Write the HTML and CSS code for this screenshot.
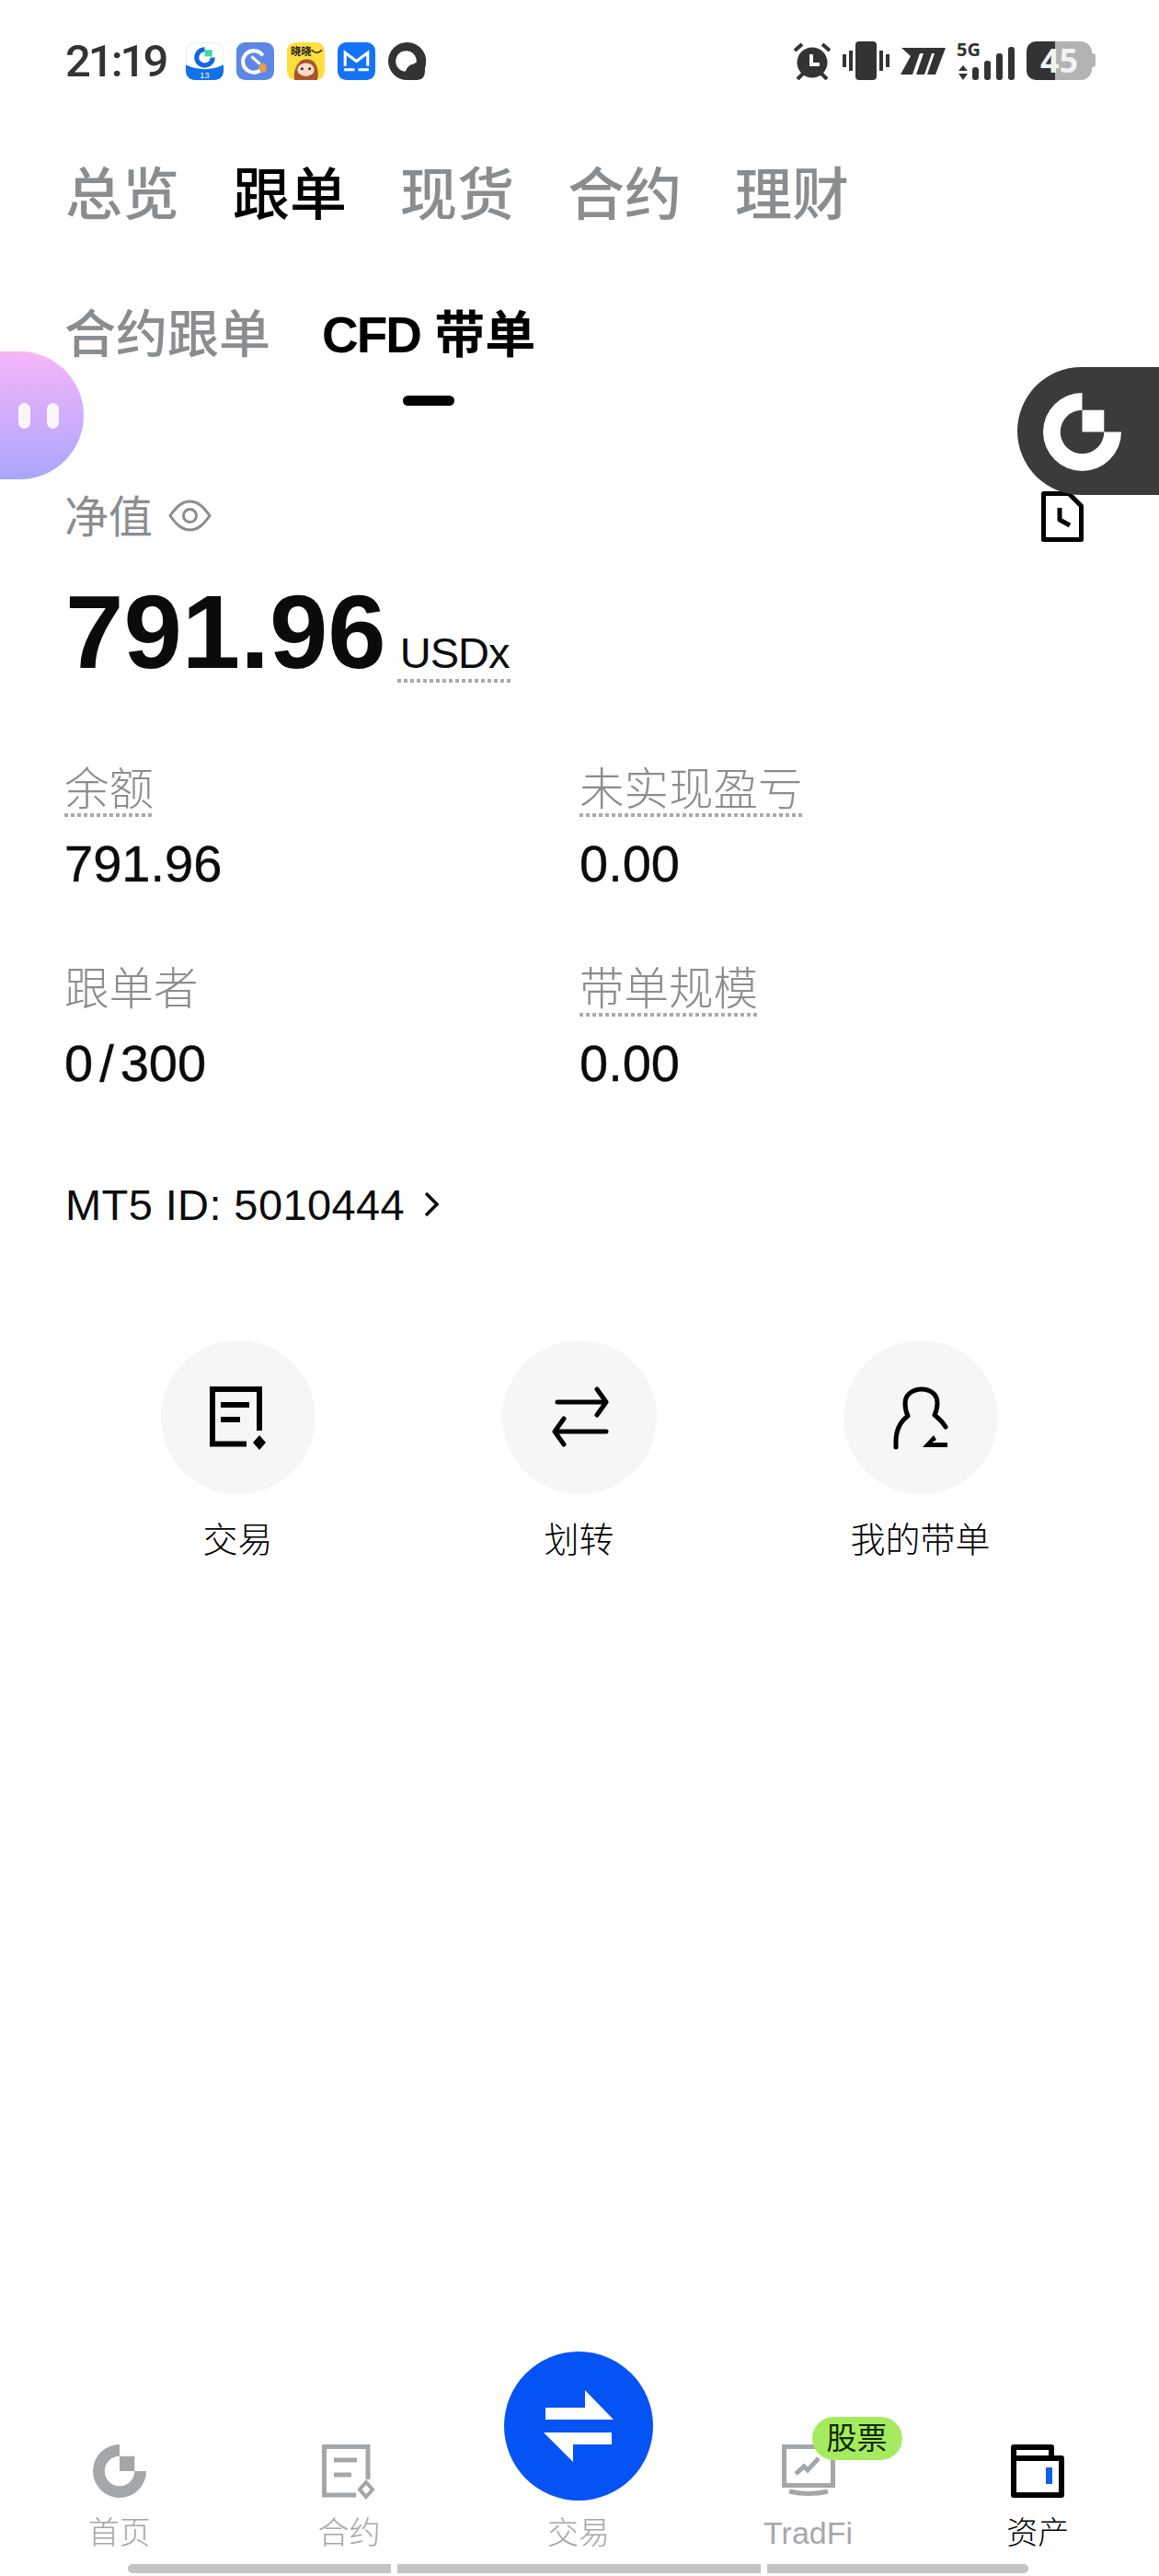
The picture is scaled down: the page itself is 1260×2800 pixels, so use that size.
FILE: index.html
```html
<!DOCTYPE html>
<html lang="zh-CN">
<head>
    <meta charset="UTF-8">
    <title>CFD 带单</title>
    <link rel="stylesheet" href="styles.css">
</head>
<body>
    <svg class="defs" width="0" height="0">
        <symbol id="logo" viewBox="0 0 100 100">
            <path d="M50 0A50 50 0 1 0 100 50H78A28 28 0 1 1 50 22Z"/>
            <path d="M50 22H78V50H50Z"/>
        </symbol>
    </svg>

    <div class="page">
        <div class="status">
            <span class="time">21:19</span>
            <div class="apps">
                <svg class="app" viewBox="0 0 40 40">
                    <rect x="0.500" y="0.500" width="39" height="39" rx="9" fill="#fff" stroke="#eee"/>
                    <path d="M0 24Q20 33 40 24V31A9 9 0 0 1 31 40H9A9 9 0 0 1 0 31Z" fill="#1170ea"/>
                    <path d="M20 5A11 11 0 1 0 31 16H26A6 6 0 1 1 20 10Z" fill="#1566e0"/>
                    <rect x="20" y="8" width="8" height="7" fill="#3fd8a0"/>
                    <text class="app-num" x="20" y="38">13</text>
                </svg>
                <svg class="app" viewBox="0 0 40 40">
                    <rect width="40" height="40" rx="9" fill="#5c87e4"/>
                    <path d="M28 14A11.500 11.500 0 1 0 29 25" fill="none" stroke="#fff" stroke-width="4"/>
                    <path d="M16 15L25 23" stroke="#fff" stroke-width="3"/>
                    <ellipse cx="28" cy="27" rx="4" ry="5" fill="#ee9d4a"/>
                </svg>
                <svg class="app" viewBox="0 0 40 40">
                    <rect width="40" height="40" rx="9" fill="#ffdf3e"/>
                    <text class="app-word" x="4" y="14">晓晓</text>
                    <path d="M26 8Q32 14 37 8" fill="none" stroke="#222" stroke-width="1.500"/>
                    <path d="M8 40Q6 28 14 20Q22 15 29 21Q35 29 32 40Z" fill="#a8552e"/>
                    <ellipse cx="20" cy="29" rx="9" ry="7" fill="#fbdcc2"/>
                    <circle cx="16" cy="28" r="1.500" fill="#333"/>
                    <circle cx="24" cy="28" r="1.500" fill="#333"/>
                </svg>
                <svg class="app" viewBox="0 0 40 40">
                    <rect width="40" height="40" rx="9" fill="#1473f5"/>
                    <path d="M8 25V11L20 20L32 11V25" fill="none" stroke="#fff" stroke-width="3"/>
                    <path d="M7 29H18M22 29H33" stroke="#fff" stroke-width="3"/>
                </svg>
                <svg class="app" viewBox="0 0 40 40">
                    <path d="M20 0A20 20 0 0 1 39 27Q40 40 31 40H20A20 20 0 0 1 20 0Z" fill="#333"/>
                    <circle cx="19" cy="20" r="11" fill="#fff"/>
                    <path d="M17 34Q20 24 27 23Q31 19 35 25L39 30L30 36Z" fill="#333"/>
                </svg>
            </div>
            <div class="sys">
                <svg class="alarm" viewBox="0 0 42 42">
                    <circle cx="21" cy="23" r="16.500" fill="#333"/>
                    <path d="M2 10L10 3M40 10L32 3M5 41L11 35M37 41L31 35" stroke="#333" stroke-width="4"/>
                    <path d="M20 14V25H29" fill="none" stroke="#fff" stroke-width="4"/>
                </svg>
                <svg class="vibrate" viewBox="0 0 51 42">
                    <rect x="14" y="0" width="23" height="42" rx="4" fill="#333"/>
                    <path d="M2 14V28M9 10V32M42 10V32M49 14V28" stroke="#333" stroke-width="4"/>
                </svg>
                <svg class="mi" viewBox="0 0 49 29">
                    <path d="M1 0H49L38 29H29L37 6H34L26 29H17L25 6H21L13 29H0L11 9Z" fill="#333"/>
                </svg>
                <div class="signal">
                    <span class="net">5G</span>
                    <svg class="bars" viewBox="0 0 63 42">
                        <path d="M7 26L12 32H2ZM7 42L2 35H12Z" fill="#333"/>
                        <rect x="17" y="28" width="7" height="14" rx="3" fill="#333"/>
                        <rect x="30" y="21" width="7" height="21" rx="3" fill="#333"/>
                        <rect x="43" y="13" width="7" height="29" rx="3" fill="#333"/>
                        <rect x="56" y="6" width="7" height="36" rx="3" fill="#333"/>
                    </svg>
                </div>
                <div class="battery">
                    <span class="battery-num">45</span>
                </div>
            </div>
        </div>

        <div class="tabs">
            <span class="tab">总览</span>
            <span class="tab active">跟单</span>
            <span class="tab">现货</span>
            <span class="tab">合约</span>
            <span class="tab">理财</span>
        </div>

        <div class="subtabs">
            <div class="subtab">合约跟单</div>
            <div class="subtab active"><span class="latin">CFD</span> 带单<i class="marker"></i></div>
        </div>

        <div class="equity-head">
            <span class="equity-label">净值</span>
            <svg class="eye" viewBox="0 0 47 35">
                <path d="M2 17.500C10 6 16 2 23.500 2S37 6 45 17.500C37 29 31 33 23.500 33S10 29 2 17.500Z"/>
                <circle cx="23.500" cy="17.500" r="7"/>
            </svg>
            <svg class="history" viewBox="0 0 46 55">
                <path d="M2.500 2.500H30L43.500 16V52.500H2.500Z"/>
                <path d="M20 18V31L31 37"/>
            </svg>
        </div>

        <div class="amount">
            <span class="amount-num">791.96</span>
            <span class="amount-unit">USDx</span>
        </div>

        <div class="stats">
            <div class="stat">
                <span class="stat-label dotted">余额</span>
                <span class="stat-value">791.96</span>
            </div>
            <div class="stat">
                <span class="stat-label dotted">未实现盈亏</span>
                <span class="stat-value">0.00</span>
            </div>
            <div class="stat">
                <span class="stat-label">跟单者</span>
                <span class="stat-value">0<span class="slash">/</span>300</span>
            </div>
            <div class="stat">
                <span class="stat-label dotted">带单规模</span>
                <span class="stat-value">0.00</span>
            </div>
        </div>

        <div class="mt5">
            <span>MT5 ID: 5010444</span>
            <svg class="chevron" viewBox="0 0 20 30">
                <path d="M4 3L16 15L4 27"/>
            </svg>
        </div>

        <div class="actions">
            <div class="action">
                <div class="action-circle">
                    <svg class="action-icon" viewBox="0 0 62 68">
                        <path class="line" d="M40 62.500H3V3H54V48"/>
                        <path class="line" d="M12 20H43M12 36H33"/>
                        <path class="solid" d="M54 53L61 61L54 69L47 61Z"/>
                    </svg>
                </div>
                <span class="action-label">交易</span>
            </div>
            <div class="action">
                <div class="action-circle">
                    <svg class="action-icon" viewBox="0 0 62 68">
                        <path class="line thin" d="M7 17H60M50 3L60 17L50 31"/>
                        <path class="line thin" d="M60 49H4M14 35L4 49L14 63"/>
                    </svg>
                </div>
                <span class="action-label">划转</span>
            </div>
            <div class="action">
                <div class="action-circle">
                    <svg class="action-icon" viewBox="0 0 62 68">
                        <path class="line thin" d="M4 66V60C4 48 9 38 17 32C15 28 14 23 14 18C14 9 22 3 32 3C42 3 49 9 49 18C49 23 48 27 46 31C51 35 55 39 58 44"/>
                        <path class="solid" d="M33 66L45 53L48 58L43 61H60V66Z"/>
                    </svg>
                </div>
                <span class="action-label">我的带单</span>
            </div>
        </div>

        <div class="nav">
            <div class="nav-row">
                <div class="nav-item">
                    <svg class="nav-icon gray-fill"><use href="#logo"/></svg>
                    <span class="nav-label">首页</span>
                </div>
                <div class="nav-item">
                    <svg class="nav-icon" viewBox="0 0 58 58">
                        <path class="gray-line" d="M37 55H2.500V2.500H50V38"/>
                        <path class="gray-line" d="M13 17H38M13 33H32"/>
                        <path class="gray-line slim" d="M48 41L55 49L48 57L41 49Z"/>
                    </svg>
                    <span class="nav-label">合约</span>
                </div>
                <div class="nav-item">
                    <div class="trade-btn">
                        <svg class="trade-arrows" viewBox="0 0 76 78">
                            <path d="M2 19H45V0L76 32H2Z"/>
                            <path d="M0 46H74V59H32V78Z"/>
                        </svg>
                    </div>
                    <span class="nav-label">交易</span>
                </div>
                <div class="nav-item">
                    <div class="nav-icon-wrap">
                        <svg class="nav-icon" viewBox="0 0 58 58">
                            <rect class="gray-line" x="2.500" y="2.500" width="53" height="42"/>
                            <path class="gray-line" d="M15 32L24 24L28 28L40 15"/>
                            <path class="gray-line" d="M8 51Q29 56 50 51"/>
                        </svg>
                        <span class="badge">股票</span>
                    </div>
                    <span class="nav-label">TradFi</span>
                </div>
                <div class="nav-item current">
                    <svg class="nav-icon" viewBox="0 0 58 58">
                        <path class="wallet" d="M3 15V3H44V15M3 15H55V55H3Z"/>
                        <rect x="38" y="25" width="7" height="18" fill="#0f5fe8"/>
                    </svg>
                    <span class="nav-label">资产</span>
                </div>
            </div>
            <div class="home-bar">
                <i class="seg first"></i>
                <i class="seg middle"></i>
                <i class="seg last"></i>
            </div>
        </div>

        <div class="float-bot">
            <i class="bot-eye"></i>
            <i class="bot-eye"></i>
        </div>
        <div class="float-logo">
            <svg class="float-logo-mark"><use href="#logo"/></svg>
        </div>
    </div>
</body>
</html>
```

FILE: styles.css
```css
* {
    box-sizing: border-box;
}

body {
    margin: 0;
    background: white;
    font-family: "Liberation Sans", "Noto Sans CJK SC", sans-serif;
    color: #000;
}

.defs {
    position: absolute;
}

.page {
    position: relative;
    width: 1260px;
    height: 2800px;
    display: flex;
    flex-direction: column;
    overflow: hidden;
}

/* status bar */
.status {
    display: flex;
    align-items: center;
    height: 42px;
    margin-top: 45px;
    padding: 0 73px 0 71px;
}

.time {
    width: 111px;
    font-family: Roboto, sans-serif;
    font-size: 49px;
    font-weight: 500;
    letter-spacing: -3px;
    color: #333;
}

.apps {
    display: flex;
    gap: 14px;
    margin-left: 20px;
}

.app {
    width: 41px;
    height: 41px;
}

.app-num {
    font-family: "Liberation Sans", sans-serif;
    font-size: 9px;
    fill: #fff;
    text-anchor: middle;
}

.app-word {
    font-family: "Noto Sans CJK SC", sans-serif;
    font-size: 11px;
    font-weight: 700;
    fill: #222;
}

.sys {
    display: flex;
    align-items: center;
    margin-left: auto;
    gap: 12px;
}

.alarm {
    width: 42px;
    height: 42px;
}

.vibrate {
    width: 51px;
    height: 42px;
}

.mi {
    width: 49px;
    height: 29px;
}

.signal {
    position: relative;
    width: 63px;
    height: 42px;
}

.net {
    position: absolute;
    top: -1px;
    left: 0;
    font-family: "Noto Sans", sans-serif;
    font-size: 20px;
    line-height: 20px;
    font-weight: 700;
    color: #333;
}

.bars {
    width: 63px;
    height: 42px;
}

.battery {
    position: relative;
    width: 71px;
    height: 42px;
    margin-left: 1px;
    border-radius: 10px 12px 12px 10px;
    background: linear-gradient(90deg, #333 44%, #b3b3b3 44%);
    text-align: center;
}

.battery::after {
    content: "";
    position: absolute;
    top: 13px;
    right: -4px;
    width: 4px;
    height: 15px;
    border-radius: 0 3px 3px 0;
    background: #b3b3b3;
}

.battery-num {
    font-family: "Open Sans", sans-serif;
    font-size: 36px;
    line-height: 42px;
    font-weight: 700;
    color: #f2f2f2;
}

/* tabs */
.tabs {
    display: flex;
    gap: 58px;
    margin-top: 96px;
    padding-left: 71px;
}

.tab {
    font-size: 62px;
    line-height: 60px;
    font-weight: 500;
    color: #8a8d90;
}

.tab.active {
    color: #000;
}

.subtabs {
    display: flex;
    gap: 56px;
    margin-top: 93px;
    padding-left: 70px;
    height: 105px;
}

.subtab {
    position: relative;
    font-size: 56px;
    line-height: 56px;
    font-weight: 500;
    color: #8a8d90;
}

.subtab.active {
    color: #000;
    font-size: 55px;
    font-weight: 700;
}

.latin {
    letter-spacing: -2px;
}

.marker {
    position: absolute;
    left: 50%;
    bottom: 0;
    width: 56px;
    height: 11px;
    margin-left: -28px;
    border-radius: 6px;
    background: #000;
}

/* equity */
.equity-head {
    display: flex;
    height: 59px;
    margin-top: 98px;
    padding: 0 82px 0 70px;
}

.equity-label {
    font-size: 48px;
    line-height: 48px;
    color: #8a8d90;
}

.eye {
    width: 47px;
    height: 35px;
    margin: 4px 0 0 17px;
    fill: none;
    stroke: #8a8d90;
    stroke-width: 3;
}

.history {
    width: 46px;
    height: 55px;
    margin: -5px 0 0 auto;
    fill: none;
    stroke: #000;
    stroke-width: 5;
    stroke-linejoin: round;
}

.amount {
    display: flex;
    align-items: baseline;
    height: 112px;
    margin-top: 33px;
    padding-left: 71px;
}

.amount-num {
    font-size: 114px;
    line-height: 112px;
    font-weight: 700;
    color: #0a0c0c;
}

.amount-unit {
    margin-left: 12px;
    padding: 0 2px 9px 3px;
    font-size: 47px;
    line-height: 47px;
    letter-spacing: -1px;
    color: #0a0c0c;
    background: repeating-linear-gradient(90deg, #aaa 0 4px, transparent 4px 7px) left bottom / 100% 4px no-repeat;
}

.stats {
    display: grid;
    grid-template-columns: 560px 1fr;
    row-gap: 82px;
    margin-top: 91px;
    padding-left: 70px;
}

.stat {
    display: flex;
    flex-direction: column;
    align-items: flex-start;
}

.stat-label {
    height: 54px;
    padding-bottom: 6px;
    font-size: 48.5px;
    line-height: 48px;
    font-weight: 300;
    color: #8a8d90;
}

.dotted {
    background: repeating-linear-gradient(90deg, #aaa 0 4px, transparent 4px 7px) left bottom / 100% 4px no-repeat;
}

.stat-value {
    margin-top: 21px;
    font-size: 56px;
    line-height: 60px;
    color: #0a0c0c;
    -webkit-text-stroke: 0.4px #0a0c0c;
}

.slash {
    margin: 0 7px;
}

.mt5 {
    display: flex;
    align-items: center;
    height: 50px;
    margin-top: 98px;
    padding-left: 71px;
    font-size: 47px;
    letter-spacing: 0.4px;
    color: #0a0c0c;
}

.chevron {
    width: 20px;
    height: 30px;
    margin-left: 19px;
    fill: none;
    stroke: #0a0c0c;
    stroke-width: 3.500;
}

/* actions */
.actions {
    display: flex;
    margin-top: 123px;
    padding-left: 73px;
}

.action {
    width: 371px;
    display: flex;
    flex-direction: column;
    align-items: center;
}

.action-circle {
    display: flex;
    align-items: center;
    justify-content: center;
    width: 168px;
    height: 167px;
    border-radius: 50%;
    background: #f5f6f7;
}

.action-icon {
    width: 62px;
    height: 68px;
    overflow: visible;
}

.line {
    fill: none;
    stroke: #000;
    stroke-width: 6;
}

.line.thin {
    stroke-width: 5;
    stroke-linecap: round;
    stroke-linejoin: round;
}

.solid {
    fill: #000;
}

.action-label {
    margin-top: 28px;
    font-size: 38px;
    line-height: 44px;
    font-weight: 300;
}

/* bottom nav */
.nav {
    margin-top: auto;
}

.nav-row {
    display: flex;
    align-items: flex-end;
    padding: 0 5px;
}

.nav-item {
    display: flex;
    flex-direction: column;
    align-items: center;
    width: 249.6px;
}

.nav-icon {
    display: block;
    width: 58px;
    height: 58px;
    overflow: visible;
}

.nav-icon-wrap {
    position: relative;
    height: 58px;
}

.gray-fill {
    fill: #a4a7aa;
}

.gray-line {
    fill: none;
    stroke: #a4a7aa;
    stroke-width: 5;
}

.gray-line.slim {
    stroke-width: 4;
}

.wallet {
    fill: none;
    stroke: #000;
    stroke-width: 6;
    stroke-linejoin: round;
}

.nav-label {
    margin-top: 18px;
    font-size: 34px;
    line-height: 40px;
    font-weight: 300;
    color: #a5a8ab;
}

.current .nav-label {
    color: #000;
}

.trade-btn {
    display: flex;
    align-items: center;
    justify-content: center;
    width: 162px;
    height: 162px;
    margin-bottom: -3px;
    border-radius: 50%;
    background: #0552f5;
}

.trade-arrows {
    width: 76px;
    height: 78px;
    fill: #fff;
}

.badge {
    position: absolute;
    top: -30px;
    left: 33px;
    width: 98px;
    height: 47px;
    border-radius: 24px;
    background: #a6eb5f;
    font-size: 33px;
    line-height: 47px;
    text-align: center;
    color: #0a2a00;
}

.home-bar {
    display: flex;
    gap: 7px;
    margin: 14px 0 3px 139px;
}

.seg {
    height: 10px;
    background: #c4c4c4;
}

.seg.first {
    width: 286px;
    border-radius: 5px 0 0 5px;
}

.seg.middle {
    width: 395px;
}

.seg.last {
    width: 284px;
    border-radius: 0 5px 5px 0;
}

/* floating widgets */
.float-bot {
    position: absolute;
    top: 382px;
    left: 0;
    display: flex;
    gap: 18px;
    align-items: center;
    width: 91px;
    height: 139px;
    padding-left: 20px;
    border-radius: 0 70px 70px 0;
    background: linear-gradient(180deg, #f7b5f8, #a9a6fd);
}

.bot-eye {
    width: 13px;
    height: 28px;
    border-radius: 7px;
    background: rgba(255, 255, 255, 0.9);
}

.float-logo {
    position: absolute;
    top: 399px;
    right: 0;
    display: flex;
    align-items: center;
    width: 154px;
    height: 139px;
    padding: 2px 0 0 28px;
    border-radius: 70px 0 0 70px;
    background: #3b3b3b;
}

.float-logo-mark {
    width: 85px;
    height: 85px;
    fill: #fff;
}
```
